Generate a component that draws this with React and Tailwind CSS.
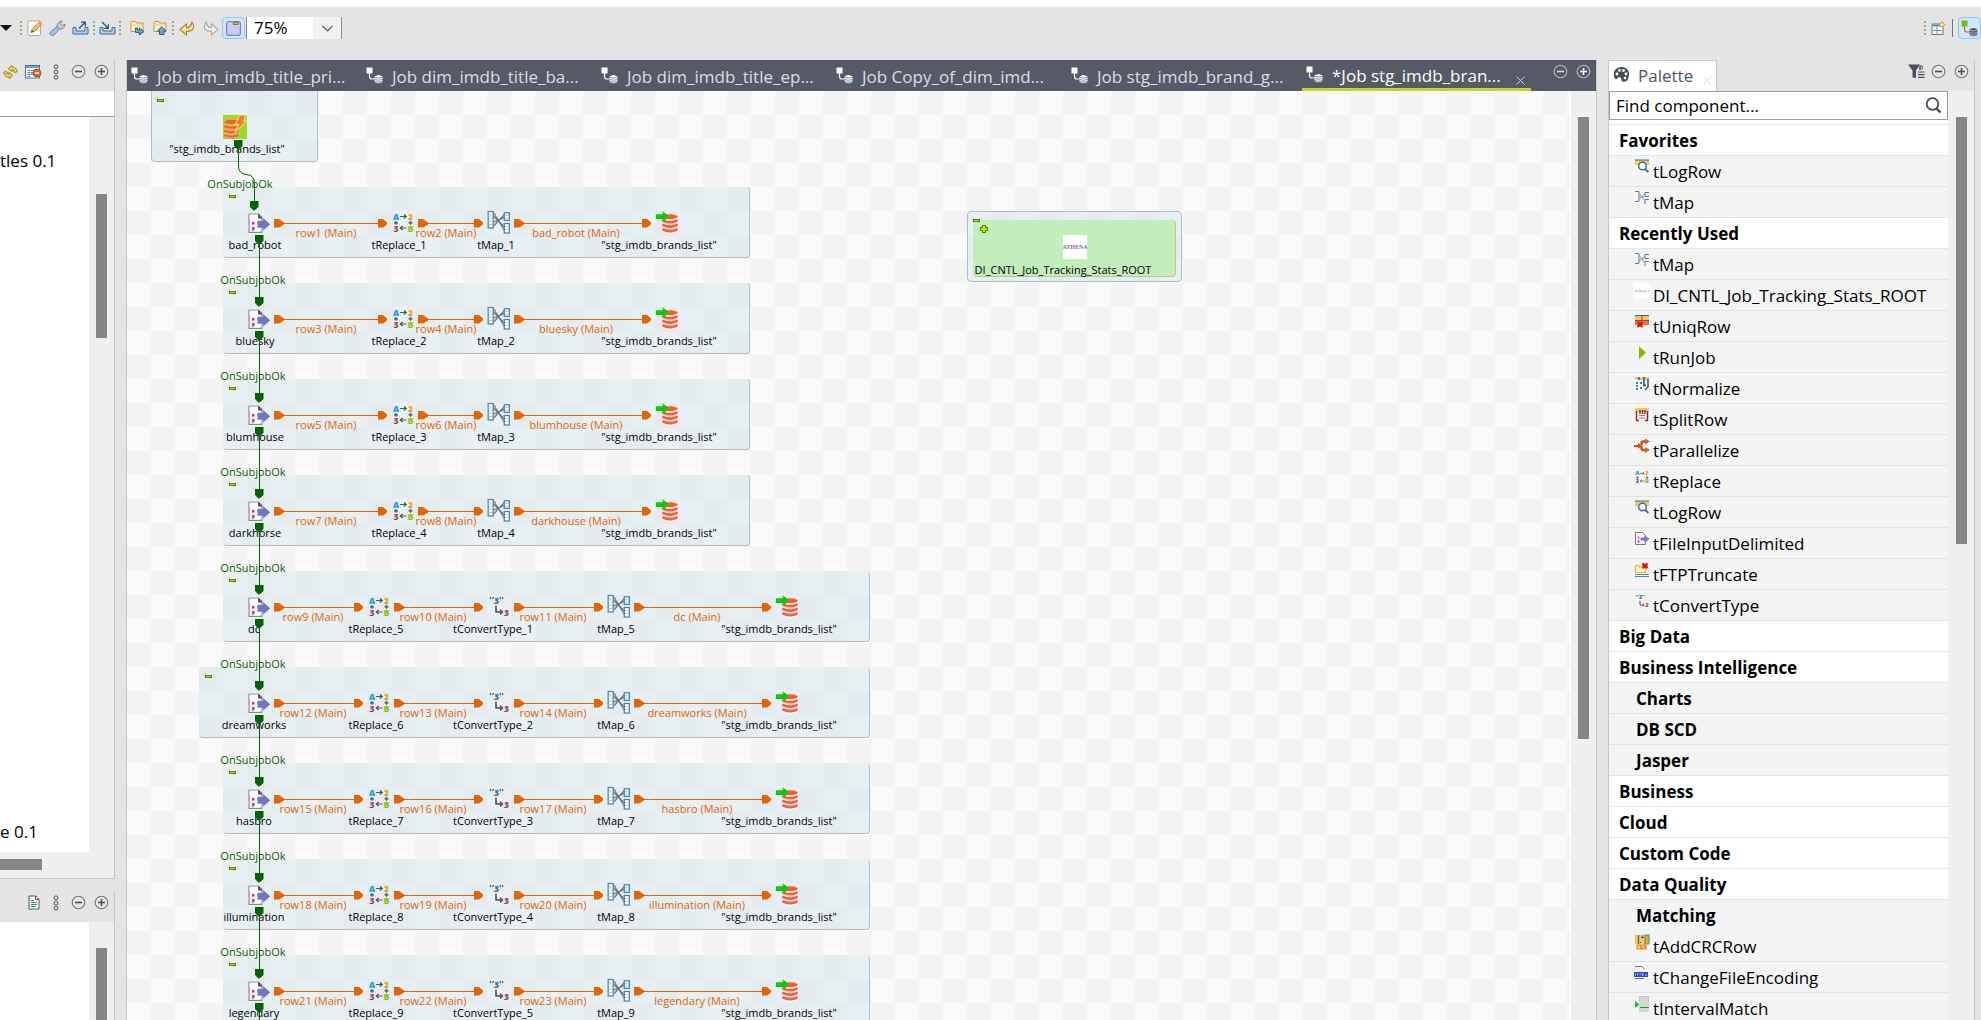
import React from "react";

/* ---------- small shared icons ---------- */

const CircleGlyph = ({ plus, tone = "#73757d", mark = "#4b4d55" }) => (
  <svg width="15" height="15" viewBox="0 0 15 15" fill="none">
    <circle cx="7.5" cy="7.5" r="6.3" stroke={tone} strokeWidth="1.1" />
    <path d={plus ? "M4 7.5h7M7.5 4v7" : "M4 7.5h7"} stroke={mark} strokeWidth="1.6" />
  </svg>
);

const Dots = () => (
  <svg width="6" height="16" viewBox="0 0 6 16" fill="none" stroke="#55575f" strokeWidth="1">
    <circle cx="3" cy="2.8" r="1.9" />
    <circle cx="3" cy="8" r="1.9" />
    <circle cx="3" cy="13.2" r="1.9" />
  </svg>
);

const Grip = () => (
  <svg width="3" height="14" viewBox="0 0 3 14" fill="#a9a493">
    <path d="M0 0h2v2H0zM0 4h2v2H0zM0 8h2v2H0zM0 12h2v2H0z" />
  </svg>
);

const SyncIcon = () => (
  <svg width="15" height="16" viewBox="0 0 15 16" fill="#f7d560" stroke="#a8761c" strokeWidth="1">
    <path d="M5.500 5 8.500 1.500 8.800 3Q13 2.500 13.500 6.500L14.500 7 12.500 9 10.500 7.300 11.500 6.800Q11 5.300 9 5.800L9.300 7.500z" />
    <path d="M9.500 11 6.500 14.500 6.200 13Q2 13.500 1.500 9.500L.5 9 2.500 7 4.500 8.700 3.500 9.200Q4 10.700 6 10.200L5.700 8.500z" />
  </svg>
);

const TableStopIcon = () => (
  <svg width="17" height="14" viewBox="0 0 17 14">
    <rect x=".5" y=".5" width="14" height="12.500" fill="#fff" stroke="#3c74b8" />
    <rect x="1" y="1" width="13" height="2" fill="#6ea4dc" />
    <path d="M2.500 5.500h2.500M6 5.500h2.500M2.500 7.500h2.500M6 7.500h2M2.500 9.500h2.500M6 9.500h2M2.500 11.300h2.500" stroke="#3c74b8" />
    <circle cx="12" cy="8" r="3.900" fill="#e8641b" stroke="#b54a10" />
    <path d="M10 8h4" stroke="#fff" strokeWidth="1.500" />
  </svg>
);

const DocIcon = () => (
  <svg width="12" height="15" viewBox="0 0 12 15">
    <path d="M1 1h6.500L11 4.500V14H1z" fill="#fff" stroke="#4d5a58" />
    <path d="M7.500 1v3.500H11" fill="none" stroke="#4d5a58" />
    <path d="M3 5.500h3M3 7.500h6M3 9.500h6M3 11.500h5" stroke="#2a8f86" />
  </svg>
);

const JobIcon = ({ node = "#fff", line = "#fff", stack = "#fff", gap = "#555a66" }) => (
  <svg width="17" height="17" viewBox="0 0 17 17" className="shrink-0">
    <path d="M3.500 6v3.500Q3.500 12 6 12h3" fill="none" stroke={line} strokeWidth="1.200" />
    <rect x="0.500" y="0.500" width="6" height="6" fill={node} />
    <path d="M8.500 9.500Q12.500 6.500 16.500 9.500v5.500q-4 2.500-8 0z" fill={stack} />
    <path d="M8.500 10.300q4 1.500 8 0M8.500 12.500q4 1.500 8 0M8.500 14.500q4 1.500 8 0" fill="none" stroke={gap} strokeWidth=".7" />
  </svg>
);

/* ---------- toolbar icons ---------- */

const EditIcon = () => (
  <svg width="16" height="16" viewBox="0 0 16 16">
    <rect x="1" y="1" width="12.500" height="14.500" rx="1" fill="#fff" stroke="#b9a98a" />
    <path d="M4 12.500l.8-3.300 7.700-7.700 2.500 2.500-7.700 7.700z" fill="#f2c05a" stroke="#b8802a" strokeWidth=".8" />
    <path d="M12.500 1.500l2.500 2.500-1.300 1.200-2.500-2.500z" fill="#e8a08a" />
    <path d="M4 12.500l1-2.600 1.700 1.700z" fill="#444" />
  </svg>
);

const WrenchIcon = () => (
  <svg width="17" height="17" viewBox="0 0 17 17">
    <path d="M2.500 15.500q-2.500-1-1-3.500L8 6.500l2.500 2.500-5.500 6q-1 1-2.500.5z" fill="#a3c0f0" stroke="#5f86c8" />
    <path d="M8 6.500Q8 2 13 .8l-1.500 3 1.700 1.700 3-1.500Q16 9 10.500 9z" fill="#c9ccd3" stroke="#777b85" strokeWidth=".9" />
  </svg>
);

const TrayIcon = ({ inward }) => (
  <svg width="17" height="14" viewBox="0 0 17 14" fill="none">
    <path d="M1 6.500h3V10h9V6.500h3V13H1z" fill="#b8cdea" stroke="#3a69a6" />
    {inward ? (
      <path d="M3 1l6 6M9.300 3.200V7.300H5.200" stroke="#1f4f78" strokeWidth="1.200" />
    ) : (
      <path d="M7 7.500l6-6M9 1.200h4.300v4.300" stroke="#1f4f78" strokeWidth="1.200" />
    )}
  </svg>
);

const FolderIcon = ({ up }) => (
  <svg width="15" height="16" viewBox="0 0 15 16">
    <path d="M1 11.500V2.500l1-1h3.500l1 1.500h6.500v8.500z" fill="#fdf0c0" stroke="#c0924a" />
    <path d="M1.500 5h11" stroke="#e6c67a" />
    {up ? (
      <path d="M6.500 14.500V11H4.500L8.800 6.500 13 11h-2v3.500z" fill="#6aaad2" stroke="#1f5580" strokeWidth=".9" />
    ) : (
      <path d="M5.500 8v4.500h4V15l4.500-3.500L9.500 8v2H7.500V8z" fill="#6aaad2" stroke="#1f5580" strokeWidth=".9" />
    )}
  </svg>
);

const UndoIcon = ({ dim }) => (
  <svg width="17" height="15" viewBox="0 0 17 15" className={dim ? "-scale-x-100" : ""}>
    <path
      d="M1 8.500 7.500 3v3.500q4 .8 5.500-5.500Q18 10 7.500 10.500V14z"
      fill={dim ? "#efefef" : "#fbe39a"}
      stroke={dim ? "#a8a8a8" : "#b5802a"}
      strokeWidth="1.100"
    />
  </svg>
);

const SubjobToggleIcon = () => (
  <svg width="15" height="15" viewBox="0 0 15 15">
    <rect x=".7" y=".7" width="13.600" height="13.600" rx="1" fill="#c9c9ff" stroke="#6f6f92" strokeWidth="1" />
    <rect x="7.500" y="1.500" width="4.500" height="2" fill="#c8e600" stroke="#577a00" strokeWidth=".8" />
  </svg>
);

const OpenPerspectiveIcon = () => (
  <svg width="15" height="15" viewBox="0 0 15 15">
    <rect x="1" y="3" width="11" height="10.500" fill="#fff" stroke="#5c7a80" />
    <path d="M1.500 4.500h10" stroke="#4f93c0" strokeWidth="2" />
    <path d="M6 5.500v8M1.500 9.500h10" stroke="#5c9a9a" />
    <path d="M11 .8 13.800 3.500 11 6.300 8.300 3.500z" fill="#ffe9a3" stroke="#bd8a1e" />
  </svg>
);

/* ---------- component icons on the design canvas ---------- */

const FileIcon = () => (
  <svg width="24" height="24" viewBox="0 0 24 24">
    <path d="M2 4h9.500L15 7.500V22.300H2z" fill="#fff" stroke="#8d8f94" strokeWidth="1.200" />
    <path d="M11 3.500 16 8.500H11z" fill="#55575d" />
    <rect x="5" y="12" width="2.500" height="2.500" fill="#e815b4" />
    <path d="M5 17h2.600v2.300L5.800 21H4.800l.6-1.700H5z" fill="#e815b4" />
    <path d="M10.800 11.300h5.700V8.800l6.300 5.500-6.300 5.500v-2.500h-5.700z" fill="#6f78c4" stroke="#5a62a8" strokeWidth=".6" />
  </svg>
);

const ReplaceIcon = ({ size = 24 }) => (
  <svg width={size} height={size} viewBox="0 0 24 24">
    <g fontFamily="Open Sans, sans-serif" fontWeight="800" fontSize="8.500" textAnchor="middle">
      <text x="5" y="9.500" fill="#12a5cf">A</text>
      <text x="19.500" y="9.500" fill="#f0a010">2</text>
      <text x="5" y="21.500" fill="#a04848">3</text>
      <text x="19.500" y="21.500" fill="#8fc400">B</text>
    </g>
    <g fill="none" stroke="#4c5058" strokeWidth="1.200">
      <path d="M9 6.500h6M13 4.500l2.200 2-2.200 2M15.500 18H9.500M11.500 16l-2.200 2 2.200 2" />
      <path d="M5 10.800v4M3 12.800h4M19.500 10.800v4M17.500 12.800h4" />
    </g>
  </svg>
);

const ConvertIcon = ({ size = 24 }) => (
  <svg width={size} height={size} viewBox="0 0 24 24">
    <g fontFamily="Open Sans, sans-serif" fontWeight="800" fontSize="8.500" textAnchor="middle">
      <text x="9.500" y="9.500" fill="#2a6fa3">3</text>
      <text x="19.500" y="21.500" fill="#a04848">3</text>
    </g>
    <path d="M3 5l1-2M5.500 5l1-2M13.500 5l-.7-2M16 5l-.7-2" stroke="#4c5058" strokeWidth="1.200" />
    <path d="M9 11.500v6.500h6M13 15.700l2.500 2.300-2.500 2.300" fill="none" stroke="#4c5058" strokeWidth="1.500" />
  </svg>
);

const MapIcon = () => (
  <svg width="24" height="24" viewBox="0 0 24 24" fill="none">
    <path d="M6.500 2.500 17.500 20.500M6.500 6 17.500 17M6.500 16 17.500 4.500M6.500 12 17.500 7.500" stroke="#6b6e75" strokeWidth="1.100" />
    <g fill="#fff" stroke="#4a86b8" strokeWidth="1.300">
      <rect x="1.200" y="1.500" width="5" height="16.500" />
      <rect x="17.300" y="2.800" width="5" height="7.500" />
      <rect x="17.300" y="13.500" width="5" height="9.500" />
    </g>
    <path d="M2 5h3.500M2 8h3.500M2 11h3.500M2 14.500h3.500M18 5.500h3.500M18 8h3.500M18 16.500h3.500M18 19.500h3.500" stroke="#b8bcc4" strokeWidth=".8" />
  </svg>
);

const DbOutIcon = () => (
  <svg width="24" height="24" viewBox="0 0 24 24">
    <g fill="#ff5a33">
      <ellipse cx="15" cy="6.800" rx="7.700" ry="2.500" />
      <path d="M7.300 9.200q7.700 3.400 15.400 0v2.600q-7.700 3.400-15.400 0z" />
      <path d="M7.300 13.600q7.700 3.400 15.400 0v2.600q-7.700 3.400-15.400 0z" />
      <path d="M7.300 18q7.700 3.400 15.400 0v2.600q-7.700 4-15.400 0z" />
    </g>
    <path d="M.8 4.300h7V1.200l6.700 5.400L7.800 12V9H.8z" fill="#16c60c" />
  </svg>
);

const DbRowIcon = () => (
  <svg width="24" height="24" viewBox="0 0 24 24">
    <rect width="24" height="24" fill="#9bdc1f" />
    <g fill="#ff5a33" stroke="#f3c9a8" strokeWidth=".4">
      <path d="M1 6q7.500-3.500 15 0v2q-7.500 3-15 0z" />
      <path d="M1 9.700q7.500 3 15 0v3q-7.500 3-15 0z" />
      <path d="M1 14.200q7.500 3 15 0v3q-7.500 3-15 0z" />
      <path d="M1 18.700q7.500 3 15 0v2.800q-7.500 3-15 0z" />
    </g>
    <path d="M16.500 0h6.500l-2.500 6h3L12 17.500l3.500-8h-3z" fill="#f58220" stroke="#f6e3b8" strokeWidth=".9" />
  </svg>
);

/* ---------- design canvas ---------- */

const At = ({ x, y, children }) => (
  <div className="absolute" style={{ left: x, top: y }}>
    {children}
  </div>
);

/* Label whose text is centred on x and y. */
const Label = ({ x, y, color = "text-black", children }) => (
  <div className="absolute flex h-0 w-0 items-center justify-center" style={{ left: x, top: y }}>
    <span className={"text-[11px] leading-4 whitespace-nowrap " + color}>{children}</span>
  </div>
);

const Collapse = ({ x, y }) => (
  <button
    type="button"
    aria-label="Collapse subjob"
    className="absolute h-[3px] w-[7px] border border-[#5a7d00] bg-[#c8e800]"
    style={{ left: x, top: y }}
  />
);

const ORANGE = "#e66400";
const GREEN = "#006400";

const Link = ({ from, to, y }) => (
  <g>
    <path d={`M${from + 8} ${y + 0.5}H${to + 2}`} stroke={ORANGE} />
    <path d={`M${from} ${y - 4}h5l5 3.500v2l-5 3h-5z`} fill={ORANGE} />
    <path d={`M${to} ${y - 4}h5l4 3.500v2l-4 3h-5z`} fill={ORANGE} />
  </g>
);

const Plug = ({ x, y }) => <path d={`M${x - 4} ${y}h8.500v6l-4 3.500h-1l-3.500-3.500z`} fill={GREEN} />;

/* Positions are relative to the canvas' top left corner: nodes hold
   [icon, icon x, label centre], links hold [start, end, label centre]. */
const SHORT = {
  width: 527,
  nodes: [
    [FileIcon, 120, 128],
    [ReplaceIcon, 264, 272],
    [MapIcon, 360, 369],
    [DbOutIcon, 528, 532],
  ],
  links: [
    [147, 251, 199],
    [291, 347, 319],
    [387, 515, 449],
  ],
};
const LONG = {
  width: 647,
  nodes: [
    [FileIcon, 120, 127],
    [ReplaceIcon, 240, 249],
    [ConvertIcon, 360, 366],
    [MapIcon, 480, 489],
    [DbOutIcon, 648, 652],
  ],
  links: [
    [147, 227, 186],
    [267, 347, 306],
    [387, 467, 426],
    [507, 635, 570],
  ],
};

const TABLE = '"stg_imdb_brands_list"';
const short = (name, n, row, output = name) => ({
  shape: SHORT,
  lead: 0,
  names: [name, `tReplace_${n}`, `tMap_${n}`, TABLE],
  rows: [`row${row} (Main)`, `row${row + 1} (Main)`, `${output} (Main)`],
});
const long = (name, n, row, lead = 0) => ({
  shape: LONG,
  lead,
  names: [name, `tReplace_${n}`, `tConvertType_${n - 4}`, `tMap_${n}`, TABLE],
  rows: [`row${row} (Main)`, `row${row + 1} (Main)`, `row${row + 2} (Main)`, `${name} (Main)`],
});

const SUBJOBS = [
  short("bad_robot", 1, 1),
  short("bluesky", 2, 3),
  short("blumhouse", 3, 5),
  short("darkhorse", 4, 7, "darkhouse"),
  long("dc", 5, 9),
  long("dreamworks", 6, 12, 24),
  long("hasbro", 7, 15),
  long("illumination", 8, 18),
  long("legendary", 9, 21),
];

const TOP = 96;
const PITCH = 96;

function Canvas() {
  return (
    <div className="relative min-w-0 flex-1 overflow-hidden bg-[repeating-conic-gradient(#f3f3f3_0_25%,#fafafa_0_50%)] bg-[length:48px_48px]">
      {/* subjob frames */}
      <div
        className="absolute rounded-sm border border-[#a9bfcb] bg-[#d5e6ee]/50"
        style={{ left: 24, top: -4, width: 167, height: 75 }}
      />
      {SUBJOBS.map((s, i) => (
        <div
          key={i}
          className="absolute rounded-sm border-r border-b border-[#a9bfcb] bg-[#d5e6ee]/50"
          style={{ left: 96 - s.lead, top: TOP + i * PITCH, width: s.shape.width + s.lead, height: 71 }}
        />
      ))}

      {/* tracking joblet */}
      <div
        className="absolute rounded-sm border border-[#a9bfcb] bg-[#d5e6ee]/50"
        style={{ left: 840, top: 120, width: 215, height: 71 }}
      />
      <div
        className="absolute rounded-sm border-r border-b border-[#c9c08c] bg-[#c1eebb]"
        style={{ left: 846, top: 129, width: 203, height: 57 }}
      />
      <Collapse x={846} y={128} />
      <At x={853} y={134}>
        <svg width="8" height="8" viewBox="0 0 8 8">
          <path d="M2 0h4v2h2v4H6v2H2V6H0V2h2z" fill="#5a7d00" />
          <path d="M3 1h2v2h2v2H5v2H3V5H1V3h2z" fill="#c8e800" />
        </svg>
      </At>
      <div
        className="absolute flex h-6 w-6 items-center justify-center overflow-hidden bg-white font-['Liberation_Serif',serif] text-[6px] font-bold text-[#8a62a0]"
        style={{ left: 936, top: 144 }}
      >
        ATHENA
      </div>
      <Label x={936} y={179}>DI_CNTL_Job_Tracking_Stats_ROOT</Label>

      {/* component icons */}
      <At x={96} y={24}>
        <DbRowIcon />
      </At>
      <Collapse x={30} y={8} />
      <Label x={100} y={58}>{TABLE}</Label>
      <Label x={113} y={93} color="text-[#006400]">OnSubjobOk</Label>
      {SUBJOBS.map((s, i) => {
        const y = TOP + i * PITCH;
        return (
          <React.Fragment key={i}>
            {i > 0 && (
              <Label x={126} y={y - 3} color="text-[#006400]">OnSubjobOk</Label>
            )}
            <Collapse x={102 - s.lead} y={y + 8} />
            {s.shape.nodes.map(([Icon, x, center], n) => (
              <React.Fragment key={n}>
                <At x={x} y={y + 23}>
                  <Icon />
                </At>
                <Label x={center} y={y + 58}>{s.names[n]}</Label>
              </React.Fragment>
            ))}
            {s.shape.links.map(([, , center], n) => (
              <Label key={n} x={center} y={y + 46} color="text-[#e66400]">{s.rows[n]}</Label>
            ))}
          </React.Fragment>
        );
      })}

      {/* connections */}
      <svg className="pointer-events-none absolute top-0 left-0" width="900" height="960" fill="none">
        <Plug x={111} y={49} />
        <path d="M111.500 55v20q0 8 8 8.500 7.500.5 8 8v22" stroke={GREEN} />
        <Plug x={127} y={110} />
        {SUBJOBS.map((s, i) => {
          const y = TOP + i * PITCH;
          return (
            <g key={i}>
              {s.shape.links.map(([from, to], n) => (
                <Link key={n} from={from} to={to} y={y + 36} />
              ))}
              <Plug x={132} y={y + 48} />
              <path d={`M132.500 ${y + 54}V${y + 112}`} stroke={GREEN} />
              {i > 0 && <Plug x={132} y={y + 14} />}
            </g>
          );
        })}
      </svg>
    </div>
  );
}

/* ---------- palette ---------- */

const P = ({ children }) => (
  <svg width="16" height="16" viewBox="0 0 16 16" fill="none">
    {children}
  </svg>
);

const paletteIcons = {
  tLogRow: (
    <P>
      <path d="M1 1h14v5H1z" fill="#fbc55a" />
      <path d="M1 1h14" stroke="#2f6ea5" />
      <circle cx="8.500" cy="7" r="3.800" fill="#fff" stroke="#2f6ea5" strokeWidth="1.400" />
      <path d="M11.300 10l3 3" stroke="#2f6ea5" strokeWidth="1.800" />
    </P>
  ),
  tMap: (
    <P>
      <path d="M1 1.500h4V11M1 11.500h4M15 2.500h-4v4M15 6.500h-4M15 9.500h-4V14" stroke="#4d7ea5" />
      <path d="M5 3l6 8M5 9l6-5M6 7h4" stroke="#9a9da3" />
    </P>
  ),
  DI_CNTL_Job_Tracking_Stats_ROOT: (
    <P>
      <rect width="16" height="16" fill="#fff" />
      <path d="M1 9l1.500-2L4 9M5 7.500h2M6 7.500V9M8 7.500V9M9.500 7.500V9M11 9V7.500L12.500 9M14 9l1-1.500" stroke="#a58bb3" strokeWidth=".8" />
    </P>
  ),
  tUniqRow: (
    <P>
      <rect x="1" y="1" width="14" height="5" fill="#fbc55a" />
      <rect x="1" y="7" width="14" height="4" fill="#ff6a3a" />
      <path d="M1 1.500h14M1 6.500h14M8 1v5" stroke="#4a5f78" />
      <path d="M3.500 8l5 5M8.500 8l-5 5" stroke="#e80c0c" strokeWidth="2.400" />
    </P>
  ),
  tRunJob: (
    <P>
      <path d="M5 1.500 12 7.500 5 14z" fill="#7fba00" />
    </P>
  ),
  tNormalize: (
    <P>
      <rect x="1" y="0" width="14" height="15" fill="#fff" />
      <path d="M1 1h14v3H1z" fill="#fbc55a" />
      <path d="M2 7h2M2 10h2M2 13h2M6 7h2M6 12h2" stroke="#1b83d8" strokeWidth="2" />
      <path d="M5 1v3M10 1v8M14 3v8l-3 3" stroke="#2266b0" strokeWidth="1.700" />
      <path d="M9 9.500h3" stroke="#a83232" strokeWidth="2" />
    </P>
  ),
  tSplitRow: (
    <P>
      <path d="M1 1h14v4H1z" fill="#fbc55a" />
      <path d="M2.500 4v10M13.500 4v10M2 13.500h3M11 13.500h3M6 3v4M8.500 3v4M11 3v4" stroke="#942a2a" strokeWidth="1.500" />
      <path d="M5 8.500h6M5 11h6" stroke="#8a8d93" />
    </P>
  ),
  tParallelize: (
    <P>
      <path d="M0 7h4V4.500L7.500 8 4 11V9H0z" fill="#c4521a" />
      <path d="M7.500 7.500V5q0-1.500 2-1.500h2M7.500 8v2q0 2 2 2h2" stroke="#c4521a" strokeWidth="2.400" />
      <path d="M11 .5 16 3.500l-5 3zM11 9l5 3-5 3z" fill="#d9642a" />
    </P>
  ),
  tReplace: <ReplaceIcon size={16} />,
  tFileInputDelimited: (
    <P>
      <path d="M1.500 1.500h7l3 3V13.500h-10z" fill="#fff" stroke="#7a7c82" />
      <path d="M4.500 5.500v2M4.500 9v3" stroke="#e815b4" strokeWidth="1.500" />
      <path d="M6.500 6.500h4V4L15.500 8l-5 4V9.500h-4z" fill="#6f78c4" />
    </P>
  ),
  tFTPTruncate: (
    <P>
      <path d="M1.500 10.500v-7h3l1 1.500h6v5.500z" fill="#fff3c4" stroke="#e8b820" strokeWidth="1.200" />
      <path d="M1 12.500h14M1 14.500h14" stroke="#4a86b8" />
      <path d="M8.500 1.500l5 4.500M13.500 1.500l-5 4.500" stroke="#e80c0c" strokeWidth="2.400" />
    </P>
  ),
  tConvertType: <ConvertIcon size={16} />,
  tAddCRCRow: (
    <P>
      <rect x="1" y="1" width="10" height="9" fill="#fbc55a" />
      <rect x="11" y="1" width="4" height="9" fill="#ffa500" stroke="#1aa0b8" />
      <path d="M4.500 1v9M7 3.500h3M8.500 1.500v3M6 8.500h1" stroke="#2f6ea5" strokeWidth="1.200" />
      <rect x="2.500" y="10.500" width="10" height="5" fill="#ef8a1a" />
      <path d="M4 12.500h2M4 14h2M7.500 12.500h1.500M10 12v2.500" stroke="#fff" strokeWidth=".8" />
    </P>
  ),
  tChangeFileEncoding: (
    <P>
      <path d="M1 1.500h7l2.500 2.500M1 13.500h9" stroke="#6d6f75" />
      <rect x="0" y="7" width="14" height="5" fill="#2c49e8" />
      <path d="M1.500 8.500v2M3.500 8.500v2M5.500 9h2M8.500 11V9h1.500M12 9v2" stroke="#c9d2ff" strokeWidth=".9" />
    </P>
  ),
  tIntervalMatch: (
    <P>
      <rect x="5" y="0" width="10" height="16" fill="#d3d5d8" />
      <path d="M5.500 1v4M14.500 1v4M7 .5h6" stroke="#a8bac8" strokeDasharray="1.500 1" />
      <path d="M1 5l4.500 3.500L1 12z" fill="#12c212" />
      <path d="M6 11.500h9" stroke="#12a812" />
    </P>
  ),
};

const GROUPS = [
  { title: "Favorites", items: ["tLogRow", "tMap"] },
  {
    title: "Recently Used",
    items: [
      "tMap", "DI_CNTL_Job_Tracking_Stats_ROOT", "tUniqRow", "tRunJob", "tNormalize", "tSplitRow",
      "tParallelize", "tReplace", "tLogRow", "tFileInputDelimited", "tFTPTruncate", "tConvertType",
    ],
  },
  { title: "Big Data" },
  { title: "Business Intelligence", subs: [{ title: "Charts" }, { title: "DB SCD" }, { title: "Jasper" }] },
  { title: "Business" },
  { title: "Cloud" },
  { title: "Custom Code" },
  {
    title: "Data Quality",
    subs: [{ title: "Matching", items: ["tAddCRCRow", "tChangeFileEncoding", "tIntervalMatch"] }],
  },
];

const PaletteItem = ({ name }) => (
  <li className="flex h-[31px] border-b border-[#dfe3e4] bg-[#f4f4f4] pl-[25px]">
    <span className="pt-[3px]">{paletteIcons[name]}</span>
    <span className="pl-[3px] leading-[31px]">{name}</span>
  </li>
);

function Palette() {
  return (
    <aside className="flex w-[367px] shrink-0 flex-col border-r border-l border-[#c6c6c6]">
      <div className="flex h-[31px] shrink-0 items-start">
        <button
          type="button"
          className="flex h-full w-[108px] items-center border-t border-r border-[#c6c6c6] bg-white pl-1 text-[17px] text-[#4f5366]"
        >
          <svg width="17" height="17" viewBox="0 0 17 17" className="-mt-1 mr-2">
            <path d="M1 11Q-.5 2 8 1q7-.5 8 6.500.2 8-5 8.300-3 .2-2.700-2.500.2-2.300-2-2.300-1.800.2-2 1.700Q2.500 14.500 1 11z" fill="#4b4f5c" />
            <g fill="#fff">
              <circle cx="4" cy="8" r="1.400" />
              <circle cx="6.500" cy="4.500" r="1.400" />
              <circle cx="10.500" cy="4.500" r="1.400" />
              <circle cx="13" cy="8" r="1.400" />
              <circle cx="12" cy="12" r="1.300" />
            </g>
          </svg>
          Palette
          <svg width="9" height="9" viewBox="0 0 9 9" stroke="#d5d5d5" className="mt-2 ml-2.5">
            <path d="M.5.5l8 8M8.500.5l-8 8" />
          </svg>
        </button>
        <div className="flex flex-1 items-center justify-end gap-2 pt-1 pr-[5px]">
          <button type="button" aria-label="Filter" className="-mr-0.5">
            <svg width="17" height="15" viewBox="0 0 17 15">
              <path d="M0 .5h12L8 6.500V14l-3.500-.5v-7z" fill="#4b4f5c" />
              <path d="M13 2l-1.500 4" stroke="#4b4f5c" />
              <circle cx="13" cy="3.500" r="1.700" fill="none" stroke="#4b4f5c" />
              <path d="M10 8h6.500M10 10.700h6.500M10 13.400h6.500" stroke="#4b4f5c" strokeWidth="1.200" />
            </svg>
          </button>
          <button type="button" aria-label="Minimize palette"><CircleGlyph /></button>
          <button type="button" aria-label="Maximize palette"><CircleGlyph plus /></button>
        </div>
      </div>
      <div className="flex min-h-0 flex-1 bg-[#efefef]">
        <div className="min-w-0 flex-1 overflow-hidden bg-white">
          <label className="mb-1 flex h-[29px] items-center border border-[#9c9c9c] bg-white pr-[5px] pl-1.5">
            <input
              type="text"
              aria-label="Find component"
              defaultValue="Find component..."
              className="min-w-0 flex-1 bg-transparent text-[17px] leading-6 text-black outline-none"
            />
            <svg width="17" height="17" viewBox="0 0 17 17" fill="none" stroke="#44495a">
              <circle cx="7.500" cy="7" r="5.800" strokeWidth="1.800" />
              <path d="M11.500 11.500l4 4" strokeWidth="2.400" />
            </svg>
          </label>
          <ul className="border-t border-[#e4e7e8] text-[17px] text-black">
            {GROUPS.map((g) => (
              <li key={g.title}>
                <div className="h-[31px] border-b border-[#e4e7e8] pl-[10px] leading-8 font-bold">{g.title}</div>
                <ul>
                  {g.items && g.items.map((n) => <PaletteItem key={n} name={n} />)}
                  {g.subs &&
                    g.subs.map((s) => (
                      <li key={s.title} className="bg-[#f4f4f4]">
                        <div
                          className={
                            "h-[31px] pl-[27px] leading-8 font-bold " +
                            (s.items ? "" : "border-b border-[#dfe3e4]")
                          }
                        >
                          {s.title}
                        </div>
                        {s.items && (
                          <ul>
                            {s.items.map((n) => (
                              <PaletteItem key={n} name={n} />
                            ))}
                          </ul>
                        )}
                      </li>
                    ))}
                </ul>
              </li>
            ))}
          </ul>
        </div>
        <div className="w-[26px] pt-[26px] pl-2">
          <div className="h-[427px] w-[11px] bg-[#868686]" />
        </div>
      </div>
    </aside>
  );
}

/* ---------- left column ---------- */

function LeftColumn() {
  return (
    <div className="flex w-[115px] shrink-0 flex-col text-[17px] text-black">
      <section className="flex h-[819px] flex-col border-r border-b border-[#c6c6c6]">
        <div className="flex h-[31px] shrink-0 items-center justify-end gap-2 pr-[5px] pb-2">
          <button type="button" aria-label="Refresh" className="-mr-px"><SyncIcon /></button>
          <button type="button" aria-label="Filter view"><TableStopIcon /></button>
          <button type="button" aria-label="View menu" className="mr-1 ml-[3px]"><Dots /></button>
          <button type="button" aria-label="Minimize view"><CircleGlyph /></button>
          <button type="button" aria-label="Maximize view"><CircleGlyph plus /></button>
        </div>
        <div className="h-[26px] shrink-0 border-b border-[#9a9a9a] bg-white" />
        <div className="flex min-h-0 flex-1 bg-[#efefef]">
          <div className="flex flex-1 flex-col bg-white pt-8 pb-2">
            <p className="leading-6">tles 0.1</p>
            <p className="mt-auto leading-6">e 0.1</p>
          </div>
          <div className="w-[25px] pt-[77px] pl-[7px]">
            <div className="h-[144px] w-[11px] bg-[#868686]" />
          </div>
        </div>
        <div className="h-[26px] shrink-0 bg-[#efefef] pt-[7px]">
          <div className="h-[11px] w-[42px] bg-[#868686]" />
        </div>
      </section>
      <section className="mt-3 flex min-h-0 flex-1 flex-col border-r border-[#c6c6c6]">
        <div className="flex h-[31px] shrink-0 items-center justify-end gap-2 pr-[5px] pb-2">
          <button type="button" aria-label="Outline" className="mr-[5px]"><DocIcon /></button>
          <button type="button" aria-label="Outline menu" className="mr-1"><Dots /></button>
          <button type="button" aria-label="Minimize outline"><CircleGlyph /></button>
          <button type="button" aria-label="Maximize outline"><CircleGlyph plus /></button>
        </div>
        <div className="flex min-h-0 flex-1 bg-[#efefef]">
          <div className="flex-1 bg-white" />
          <div className="flex w-[25px] flex-col pt-[26px] pl-[7px]">
            <div className="w-[11px] flex-1 bg-[#868686]" />
          </div>
        </div>
      </section>
    </div>
  );
}

/* ---------- editor ---------- */

const TABS = [
  "Job dim_imdb_title_pri...",
  "Job dim_imdb_title_ba...",
  "Job dim_imdb_title_ep...",
  "Job Copy_of_dim_imd...",
  "Job stg_imdb_brand_g...",
  "*Job stg_imdb_bran...",
];

function Editor() {
  return (
    <main className="flex min-w-0 flex-1 flex-col border-r border-l border-[#c6c6c6]">
      <div className="flex h-[31px] shrink-0 bg-[#555a66]">
        {TABS.map((t, i) => {
          const active = i === TABS.length - 1;
          return (
            <button
              key={t}
              type="button"
              className={
                "flex min-w-0 items-center pl-1 text-[17px] leading-7 whitespace-nowrap " +
                (active ? "w-[229px] border-b-[3px] border-[#c3d62e] text-white" : "w-[235px] pb-px text-[#dcdee2]")
              }
            >
              <JobIcon />
              <span className={"pl-[9px] " + (active ? "pt-1" : "pt-[3px]")}>{t}</span>
              {active && (
                <svg width="9" height="9" viewBox="0 0 9 9" stroke="#c9cbd0" className="mt-3 mr-1.5 ml-auto">
                  <path d="M.5.5l8 8M8.500.5l-8 8" />
                </svg>
              )}
            </button>
          );
        })}
        <div className="flex flex-1 items-center justify-end gap-2 pr-[5px] pb-2">
          <button type="button" aria-label="Minimize editor"><CircleGlyph tone="#b9bbc1" mark="#d5d7db" /></button>
          <button type="button" aria-label="Maximize editor"><CircleGlyph plus tone="#b9bbc1" mark="#fff" /></button>
        </div>
      </div>
      <div className="flex min-h-0 flex-1">
        <Canvas />
        <div className="w-[26px] border-l border-white bg-[#efefef] pt-[26px] pl-[7px]">
          <div className="h-[622px] w-[11px] bg-[#868686]" />
        </div>
      </div>
    </main>
  );
}

/* ---------- toolbar ---------- */

const Tool = ({ label, children }) => (
  <button type="button" aria-label={label} className="flex h-[22px] w-[23px] items-center justify-center">
    {children}
  </button>
);

function Toolbar() {
  return (
    <header className="flex h-[54px] shrink-0 items-start border-t-2 border-[#efefef] pt-[9px]">
      <div className="flex items-center">
        <button type="button" aria-label="More" className="flex h-[22px] w-[20px] items-center">
          <svg width="12" height="6" viewBox="0 0 12 6"><path d="M0 0h12L6 6z" fill="#111" /></svg>
        </button>
        <Grip />
        <Tool label="Edit"><EditIcon /></Tool>
        <Tool label="Settings"><WrenchIcon /></Tool>
        <Tool label="Export"><TrayIcon /></Tool>
        <span className="w-px" />
        <Grip />
        <Tool label="Import"><TrayIcon inward /></Tool>
        <Grip />
        <span className="w-1" />
        <Tool label="Export items"><FolderIcon /></Tool>
        <Tool label="Import items"><FolderIcon up /></Tool>
        <Grip />
        <span className="w-px" />
        <Tool label="Undo"><UndoIcon /></Tool>
        <Tool label="Redo"><UndoIcon dim /></Tool>
        <button
          type="button"
          aria-label="Show subjobs"
          className="flex h-[22px] w-[23px] items-center justify-center rounded-sm border border-[#90c8f6] bg-[#cce8ff]"
        >
          <SubjobToggleIcon />
        </button>
        <label className="ml-px flex h-[22px] w-[96px] items-center border-r border-l border-[#8a8a8a] bg-white">
          <select aria-label="Zoom" className="min-w-0 flex-1 appearance-none bg-transparent pl-[7px] text-[17px] leading-[22px] text-black outline-none">
            <option>75%</option>
          </select>
          <span className="flex h-full w-[28px] items-center justify-center bg-[#f2f2f2]">
            <svg width="11" height="7" viewBox="0 0 11 7" fill="none" stroke="#555"><path d="M.5.8 5.500 5.800l5-5" strokeWidth="1.200" /></svg>
          </span>
        </label>
      </div>
      <div className="ml-auto flex items-center">
        <Grip />
        <Tool label="Open perspective"><OpenPerspectiveIcon /></Tool>
        <span className="mr-[5px] ml-0.5 h-[18px] w-px bg-[#777]" />
        <button
          type="button"
          aria-label="Integration perspective"
          className="flex h-[22px] w-[23px] items-center justify-center rounded-sm border border-[#90c8f6] bg-[#cce8ff]"
        >
          <JobIcon node="#7fba00" line="#e0524a" stack="#4b4f5c" gap="#cce8ff" />
        </button>
      </div>
    </header>
  );
}

export default function App() {
  return (
    <div className="flex h-screen flex-col overflow-hidden bg-[#e4e4e4] pt-1.5 font-['Open_Sans','Noto_Sans',sans-serif] before:absolute before:inset-x-0 before:top-0 before:h-1.5 before:bg-white">
      <Toolbar />
      <div className="flex min-h-0 flex-1 pr-1.5">
        <LeftColumn />
        <div className="w-[11px] shrink-0" />
        <Editor />
        <div className="w-[11px] shrink-0" />
        <Palette />
      </div>
    </div>
  );
}
